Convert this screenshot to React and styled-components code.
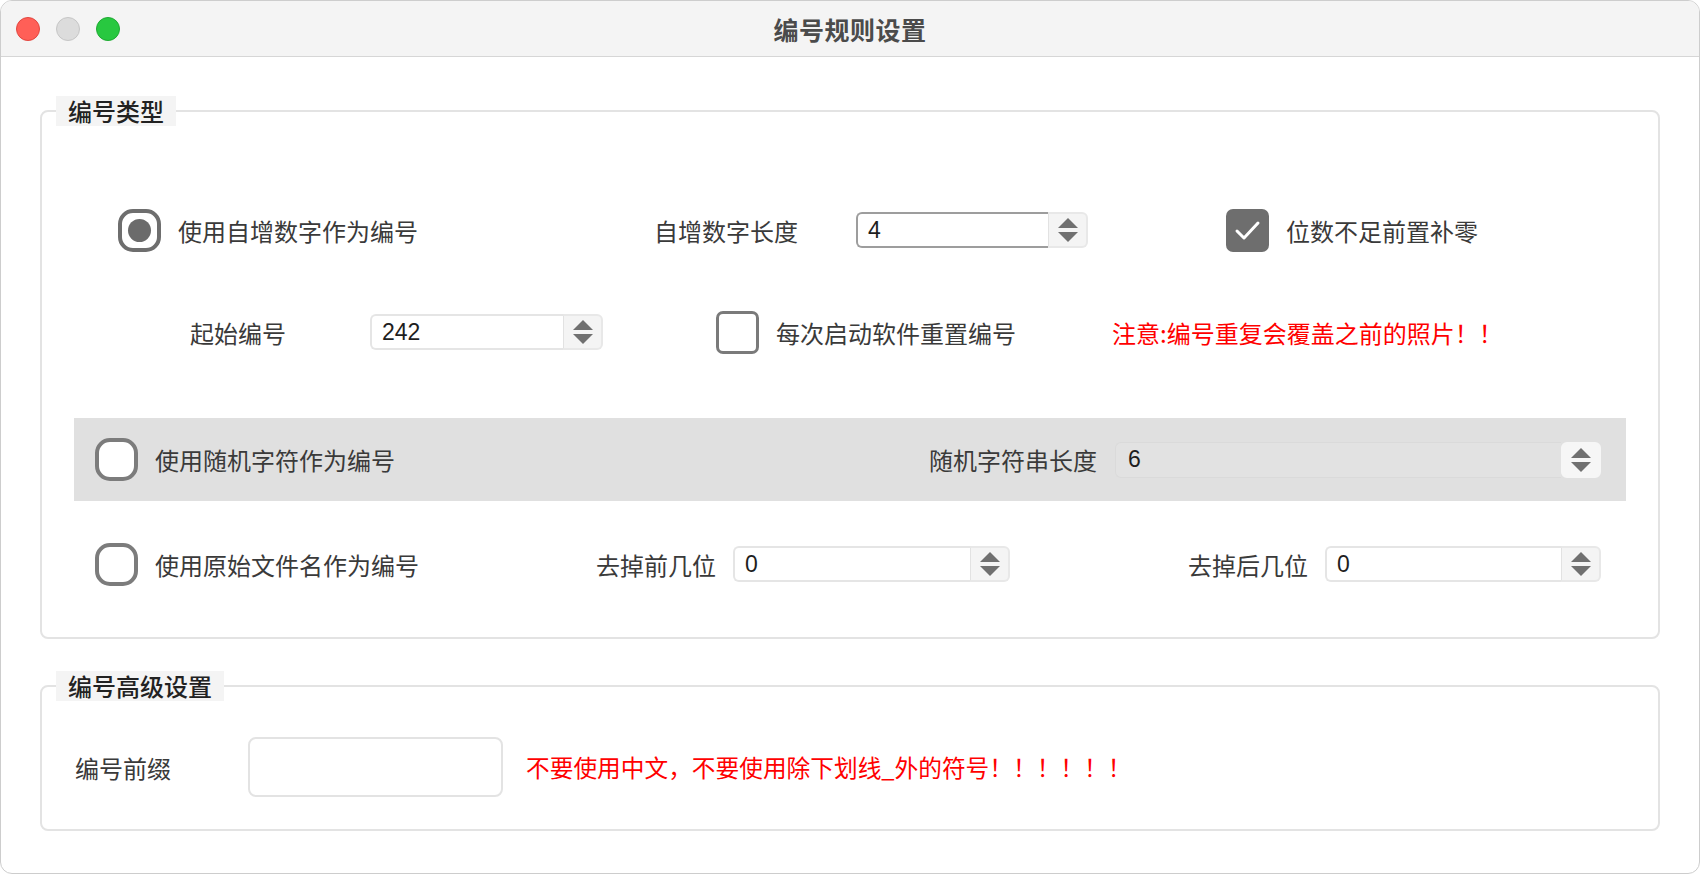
import React from "react";
import styled, { createGlobalStyle } from "styled-components";

const GlobalStyle = createGlobalStyle`
  html, body { margin: 0; padding: 0; background: #ffffff; }
  body { font-family: "Noto Sans CJK SC", "Noto Sans", sans-serif; }
  * { box-sizing: border-box; }
`;

const Window = styled.div`
  width: 1700px;
  height: 874px;
  border: 1px solid #cdcdcd;
  border-radius: 12px;
  overflow: hidden;
  background: #ffffff;
`;

const TitleBar = styled.div`
  height: 56px;
  background: #f4f4f4;
  border-bottom: 1px solid #d6d6d6;
  display: grid;
  grid-template-columns: 1fr auto 1fr;
  align-items: center;
`;

const Lights = styled.div`
  display: flex;
  gap: 16px;
  padding-left: 15px;
`;

const Light = styled.span`
  width: 24px;
  height: 24px;
  border-radius: 50%;
  background: ${(p) => p.$color};
  border: 1px solid ${(p) => p.$edge};
`;

const Title = styled.div`
  font-size: 25px;
  font-weight: 700;
  color: #4b4b4b;
  letter-spacing: 0.5px;
`;

const Content = styled.div`
  padding: 39px 39px 0;
`;

const Group = styled.fieldset`
  margin: ${(p) => p.$mt || 0}px 0 0;
  padding: 0 0 ${(p) => p.$pb}px;
  border: 2px solid #e3e3e3;
  border-radius: 8px;
  min-width: 0;
`;

const Legend = styled.legend`
  margin-left: 14px;
  padding: 0 12px;
  height: 30px;
  line-height: 30px;
  background: #f4f4f4;
  font-size: 24px;
  font-weight: 500;
  color: #222222;
`;

const Row = styled.div`
  display: flex;
  align-items: center;
  height: ${(p) => p.$h || 44}px;
  margin-top: ${(p) => p.$mt}px;
  padding-left: ${(p) => p.$pl}px;
`;

const Band = styled.div`
  display: flex;
  align-items: center;
  height: 83px;
  margin: 64px 32px 0;
  padding: 0 25px 0 21px;
  background: #e0e0e0;
`;

const Option = styled.label`
  display: flex;
  align-items: center;
  gap: 17px;
  width: ${(p) => (p.$w ? `${p.$w}px` : "auto")};
  margin-left: ${(p) => p.$ml || 0}px;
  flex-shrink: 0;
`;

const Text = styled.span`
  font-size: 24px;
  color: #3a3a3a;
  white-space: nowrap;
`;

const FieldLabel = styled.span`
  width: ${(p) => p.$w}px;
  margin-left: ${(p) => p.$ml || 0}px;
  flex-shrink: 0;
  font-size: 24px;
  color: #3a3a3a;
  white-space: nowrap;
`;

const Note = styled.span`
  font-size: ${(p) => p.$size || 24}px;
  color: #ff0000;
  white-space: nowrap;
`;

const Radio = styled.span`
  width: 43px;
  height: 43px;
  border: 4px solid ${(p) => (p.$checked ? "#6e6e6e" : "#7c7c7c")};
  border-radius: 15px;
  background: #ffffff;
  display: grid;
  place-items: center;
  &::after {
    content: "";
    display: ${(p) => (p.$checked ? "block" : "none")};
    width: 23px;
    height: 23px;
    border-radius: 50%;
    background: #6b6b6b;
  }
`;

const Check = styled.span`
  width: 43px;
  height: 43px;
  border-radius: 7px;
  border: ${(p) => (p.$checked ? "none" : "3px solid #7a7a7a")};
  background: ${(p) => (p.$checked ? "#6e6e6e" : "#ffffff")};
  display: grid;
  place-items: center;
`;

const SpinBox = styled.div`
  display: flex;
  width: ${(p) => (p.$w ? `${p.$w}px` : "auto")};
  flex: ${(p) => (p.$w ? "0 0 auto" : "1 1 auto")};
  min-width: 0;
  height: 36px;
`;

const SpinField = styled.div`
  flex: 1;
  display: flex;
  align-items: center;
  padding-left: ${(p) => (p.$flat ? 12 : 10)}px;
  border: ${(p) =>
    p.$flat ? "1px solid #dadada" : `2px solid ${p.$focus ? "#9d9d9d" : "#e5e5e5"}`};
  border-right: none;
  border-radius: 6px 0 0 6px;
  background: ${(p) => (p.$flat ? "#e2e2e2" : "#ffffff")};
  font-family: "Liberation Sans", Arial, sans-serif;
  font-size: 23px;
  color: #1e1e1e;
`;

const SpinButtons = styled.div`
  width: 40px;
  display: flex;
  flex-direction: column;
  align-items: center;
  justify-content: center;
  gap: 4px;
  background: ${(p) => (p.$flat ? "#f6f6f6" : "#f4f4f4")};
  border: 2px solid ${(p) => (p.$flat ? "#f6f6f6" : "#e8e8e8")};
  border-left: 1px solid ${(p) => (p.$flat ? "#f6f6f6" : "#e2e2e2")};
  border-radius: ${(p) => (p.$flat ? "6px" : "0 6px 6px 0")};
`;

const PrefixInput = styled.div`
  width: 255px;
  height: 60px;
  border: 2px solid #e3e3e3;
  border-radius: 8px;
  background: #ffffff;
  margin-right: 23px;
  flex-shrink: 0;
`;

const Arrows = () => (
  <>
    <svg width="20" height="10" viewBox="0 0 20 10">
      <polygon points="0,10 10,0 20,10" fill="#707070" />
    </svg>
    <svg width="20" height="10" viewBox="0 0 20 10">
      <polygon points="0,0 20,0 10,10" fill="#707070" />
    </svg>
  </>
);

const Spin = ({ value, w, focus, flat }) => (
  <SpinBox $w={w}>
    <SpinField $focus={focus} $flat={flat}>{value}</SpinField>
    <SpinButtons $flat={flat}>
      <Arrows />
    </SpinButtons>
  </SpinBox>
);

const CheckMark = () => (
  <svg width="43" height="43" viewBox="0 0 43 43">
    <polyline
      points="11,22 18,29 32,14"
      fill="none"
      stroke="#ffffff"
      strokeWidth="3"
      strokeLinecap="round"
      strokeLinejoin="round"
    />
  </svg>
);

export default function App() {
  return (
    <>
      <GlobalStyle />
      <Window>
        <TitleBar>
          <Lights>
            <Light $color="#ff5f57" $edge="#e2463f" />
            <Light $color="#dcdcdc" $edge="#c6c6c6" />
            <Light $color="#28c840" $edge="#1eaa32" />
          </Lights>
          <Title>编号规则设置</Title>
          <div />
        </TitleBar>
        <Content>
          <Group $pb={51}>
            <Legend>编号类型</Legend>
            <Row $mt={82} $pl={76}>
              <Option $w={536}>
                <Radio $checked />
                <Text>使用自增数字作为编号</Text>
              </Option>
              <FieldLabel $w={202}>自增数字长度</FieldLabel>
              <Spin value="4" w={232} focus />
              <Option $ml={138}>
                <Check $checked>
                  <CheckMark />
                </Check>
                <Text>位数不足前置补零</Text>
              </Option>
            </Row>
            <Row $mt={58} $pl={148}>
              <FieldLabel $w={180}>起始编号</FieldLabel>
              <Spin value="242" w={233} />
              <Option $ml={113} $w={396}>
                <Check />
                <Text>每次启动软件重置编号</Text>
              </Option>
              <Note>注意:编号重复会覆盖之前的照片！！</Note>
            </Row>
            <Band>
              <Option $w={834}>
                <Radio />
                <Text>使用随机字符作为编号</Text>
              </Option>
              <FieldLabel $w={186}>随机字符串长度</FieldLabel>
              <Spin value="6" flat />
            </Band>
            <Row $mt={41} $pl={53}>
              <Option $w={501}>
                <Radio />
                <Text>使用原始文件名作为编号</Text>
              </Option>
              <FieldLabel $w={137}>去掉前几位</FieldLabel>
              <Spin value="0" w={277} />
              <FieldLabel $w={137} $ml={178}>去掉后几位</FieldLabel>
              <Spin value="0" w={276} />
            </Row>
          </Group>
          <Group $mt={32} $pb={32}>
            <Legend>编号高级设置</Legend>
            <Row $mt={36} $h={60} $pl={33}>
              <FieldLabel $w={173}>编号前缀</FieldLabel>
              <PrefixInput />
              <Note $size={23.7}>不要使用中文，不要使用除下划线_外的符号！！！！！！</Note>
            </Row>
          </Group>
        </Content>
      </Window>
    </>
  );
}
